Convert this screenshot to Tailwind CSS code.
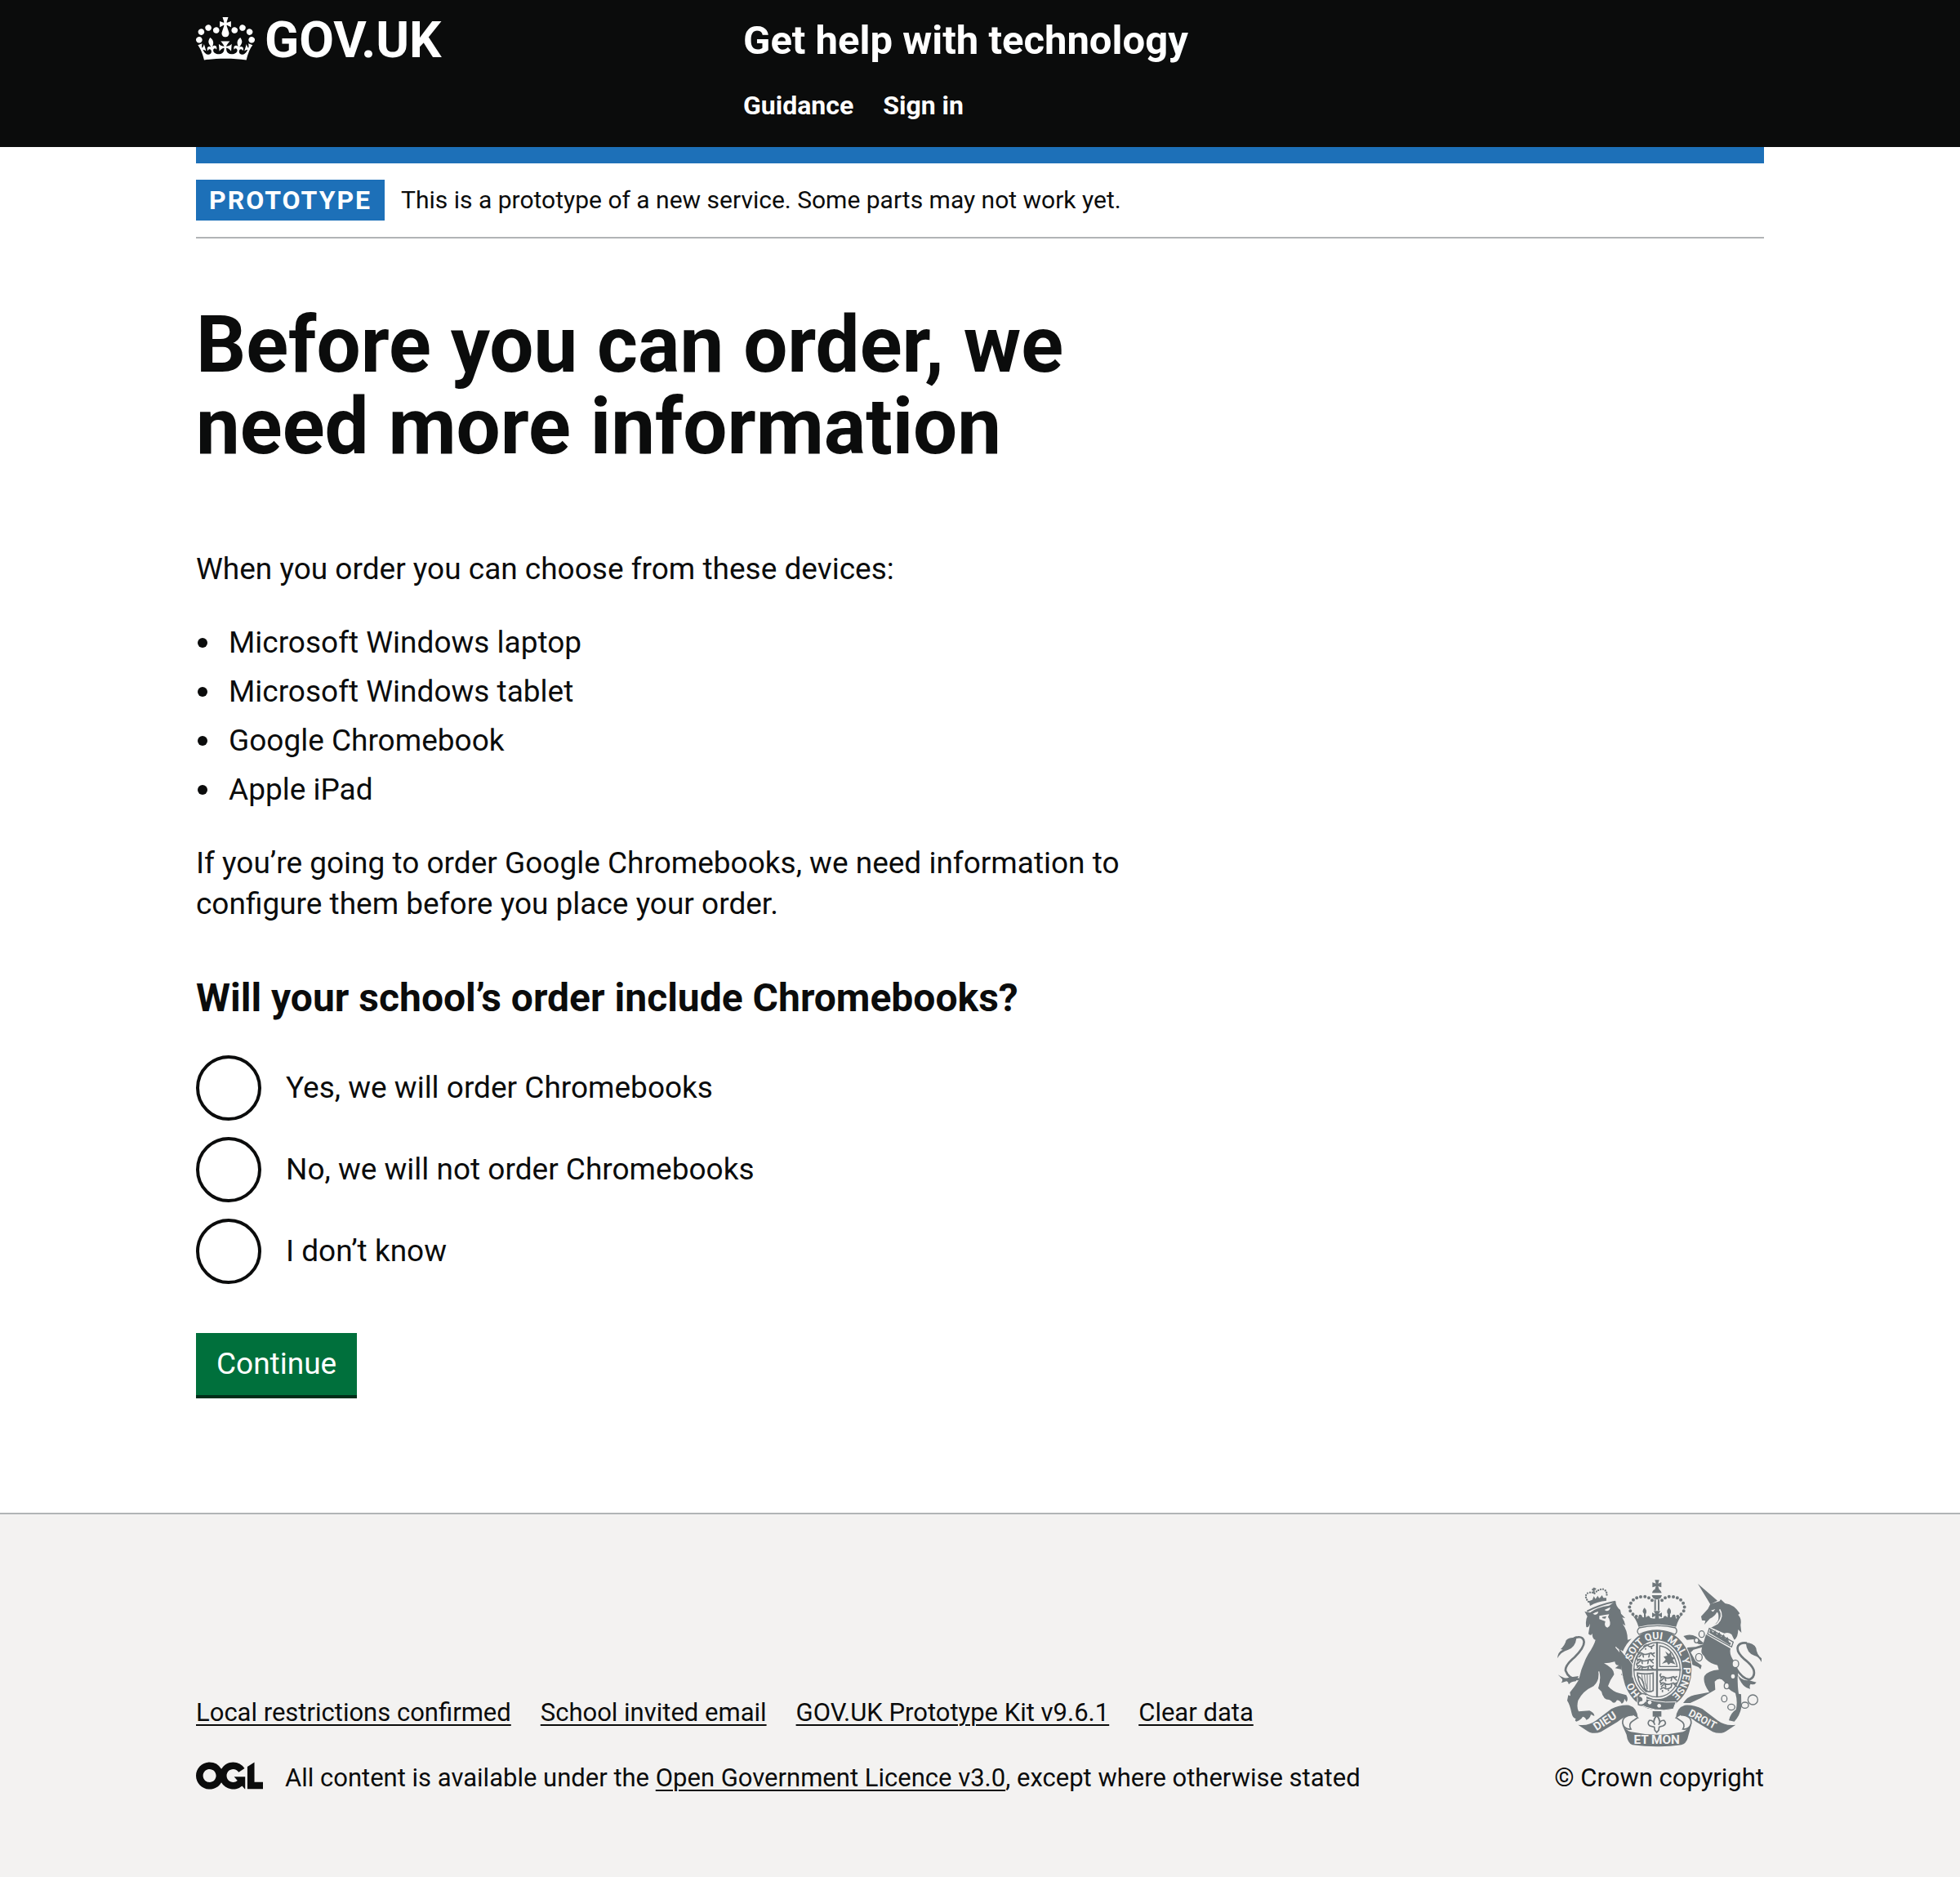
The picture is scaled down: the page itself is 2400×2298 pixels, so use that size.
<!DOCTYPE html>
<html lang="en">
<head>
<meta charset="utf-8">
<meta name="viewport" content="width=device-width, initial-scale=1">
<title>Before you can order, we need more information – Get help with technology</title>
<script src="https://cdn.jsdelivr.net/npm/@tailwindcss/browser@4"></script>
</head>
<body class="flex min-h-screen flex-col bg-[#f3f2f1] font-[Roboto,'Liberation_Sans',sans-serif] text-[#0b0c0c]">
<header class="bg-[#0b0c0c] px-10 text-white">
  <div class="mx-auto flex h-[180px] max-w-[1920px] items-start">
    <a href="#" class="flex w-[670px] shrink-0 items-start gap-3" aria-label="GOV.UK">
      <svg class="mt-[21px] h-[53px] w-[72px] shrink-0" viewBox="0 0 132 97" fill="currentColor" aria-hidden="true"><path fill-rule="evenodd" d="M25 30.2c3.5 1.5 7.7-.2 9.1-3.7 1.5-3.6-.2-7.8-3.9-9.2-3.6-1.4-7.6.3-9.1 3.9-1.4 3.5.3 7.5 3.9 9zM9 39.5c3.6 1.5 7.8-.2 9.2-3.7 1.5-3.6-.2-7.8-3.9-9.1-3.6-1.5-7.6.2-9.1 3.8-1.4 3.5.3 7.5 3.8 9zM4.4 57.2c3.5 1.5 7.7-.2 9.1-3.8 1.5-3.6-.2-7.7-3.9-9.1-3.5-1.5-7.6.3-9.1 3.8-1.4 3.5.3 7.6 3.9 9.1zm38.3-21.4c3.5 1.5 7.7-.2 9.1-3.8 1.5-3.6-.2-7.7-3.9-9.1-3.6-1.5-7.6.3-9.1 3.8-1.3 3.6.4 7.7 3.9 9.1zm64.4-5.6c-3.6 1.5-7.8-.2-9.1-3.7-1.5-3.6.2-7.8 3.8-9.2 3.6-1.4 7.7.3 9.2 3.9 1.3 3.5-.4 7.5-3.9 9zm15.9 9.3c-3.6 1.5-7.7-.2-9.1-3.7-1.5-3.6.2-7.8 3.7-9.1 3.6-1.5 7.7.2 9.2 3.8 1.5 3.5-.3 7.5-3.8 9zm4.7 17.7c-3.6 1.5-7.8-.2-9.2-3.8-1.5-3.6.2-7.7 3.9-9.1 3.6-1.5 7.7.3 9.2 3.8 1.3 3.5-.4 7.6-3.9 9.1zM89.3 35.8c-3.6 1.5-7.8-.2-9.2-3.8-1.4-3.6.2-7.7 3.9-9.1 3.6-1.5 7.7.3 9.2 3.8 1.4 3.6-.3 7.7-3.9 9.1zM69.7 17.7l8.9 4.7V9.3l-8.9 2.8c-.2-.3-.5-.6-.9-.9L72.4 0H59.6l3.5 11.2c-.3.3-.6.5-.9.9l-8.8-2.8v13.1l8.8-4.7c.3.3.6.7.9.9l-5 15.4v.1c-.2.8-.4 1.6-.4 2.4 0 4.1 3.1 7.5 7 8.1h.2c.3 0 .7.1 1 .1.4 0 .7 0 1-.1h.2c4-.6 7.1-4.1 7.1-8.1 0-.8-.1-1.7-.4-2.4V34l-5.1-15.4c.4-.2.7-.6 1-.9zM66 92.8c16.9 0 32.8 1.1 47.1 3.2 4-16.9 8.9-26.7 14-33.5l-9.6-3.4c1 4.9 1.1 7.2 0 10.2-1.5-1.4-3-4.3-4.2-8.7L108.6 76c2.8-2 5-3.2 7.5-3.3-4.4 9.4-10 11.9-13.6 11.2-4.3-.8-6.3-4.6-5.6-7.9 1-4.7 5.7-5.9 8-.5 4.3-8.7-3-11.4-7.6-8.8 7.1-7.2 7.9-13.5 2.1-21.1-8 6.1-8.1 12.3-4.5 20.8-4.7-5.4-12.1-2.5-9.5 6.2 3.4-5.2 7.9-2 7.2 3.1-.6 4.3-6.4 7.8-13.5 7.2-10.3-.9-10.9-8-11.2-13.8 2.5-.5 7.1 1.8 11 7.3L80.2 60c-4.1 4.4-8 5.3-12.3 5.4 1.4-4.4 8-11.6 8-11.6H55.5s6.4 7.2 7.9 11.6c-4.2-.1-8-1-12.3-5.4l1.4 16.4c3.9-5.5 8.5-7.7 10.9-7.3-.3 5.8-.9 12.8-11.1 13.8-7.2.6-12.9-2.9-13.5-7.2-.7-5 3.8-8.3 7.1-3.1 2.7-8.7-4.6-11.6-9.4-6.2 3.7-8.5 3.6-14.7-4.6-20.8-5.8 7.6-5 13.9 2.2 21.1-4.7-2.6-11.9.1-7.7 8.8 2.3-5.5 7.1-4.2 8.1.5.7 3.3-1.3 7.1-5.7 7.9-3.5.7-9-1.8-13.5-11.2 2.5.1 4.7 1.3 7.5 3.3l-4.7-15.4c-1.2 4.4-2.7 7.2-4.3 8.7-1.1-3-.9-5.3 0-10.2l-9.5 3.4c5 6.9 9.9 16.7 14 33.5 14.8-2.1 30.8-3.2 47.7-3.2z"/></svg>
      <span class="text-[62px] leading-[98px] font-bold">GOV.UK</span>
    </a>
    <div class="pt-5">
      <a href="#" class="block text-[49px] leading-[60px] font-bold">Get help with technology</a>
      <nav class="mt-[29px] flex gap-9 text-[32px] leading-[40px] font-bold" aria-label="Main">
        <a href="#">Guidance</a>
        <a href="#">Sign in</a>
      </nav>
    </div>
  </div>
</header>

<div class="grow bg-white px-10">
  <div class="mx-auto max-w-[1920px] border-t-[20px] border-[#1d70b8] pb-[140px]">
    <div class="flex items-center gap-5 border-b-2 border-[#b1b4b6] py-5">
      <strong class="bg-[#1d70b8] px-4 text-[32px] leading-[50px] font-bold tracking-[2px] text-white uppercase">Prototype</strong>
      <span class="text-[30px] leading-[40px]">This is a prototype of a new service. Some parts may not work yet.</span>
    </div>
    <main class="max-w-[1250px] pt-20 text-[37px] leading-[50px]">
      <h1 class="mb-[100px] text-[96px] leading-[100px] font-bold">Before you can order, we need more information</h1>
      <p class="mb-10">When you order you can choose from these devices:</p>
      <ul class="mb-10 flex list-none flex-col gap-[10px] pl-[2px]">
        <li class="flex items-center gap-[26px] before:size-3 before:rounded-full before:bg-[#0b0c0c]">Microsoft Windows laptop</li>
        <li class="flex items-center gap-[26px] before:size-3 before:rounded-full before:bg-[#0b0c0c]">Microsoft Windows tablet</li>
        <li class="flex items-center gap-[26px] before:size-3 before:rounded-full before:bg-[#0b0c0c]">Google Chromebook</li>
        <li class="flex items-center gap-[26px] before:size-3 before:rounded-full before:bg-[#0b0c0c]">Apple iPad</li>
      </ul>
      <p class="mb-[60px]">If you’re going to order Google Chromebooks, we need information to configure them before you place your order.</p>
      <form>
        <fieldset>
          <legend class="mb-10 text-[48px] leading-[60px] font-bold">Will your school’s order include Chromebooks?</legend>
          <div class="flex flex-col gap-5">
            <div class="flex items-center gap-[30px]">
              <input type="radio" name="chromebooks" id="yes" value="yes" class="size-20 appearance-none rounded-full border-4 border-[#0b0c0c] bg-white">
              <label for="yes">Yes, we will order Chromebooks</label>
            </div>
            <div class="flex items-center gap-[30px]">
              <input type="radio" name="chromebooks" id="no" value="no" class="size-20 appearance-none rounded-full border-4 border-[#0b0c0c] bg-white">
              <label for="no">No, we will not order Chromebooks</label>
            </div>
            <div class="flex items-center gap-[30px]">
              <input type="radio" name="chromebooks" id="unknown" value="unknown" class="size-20 appearance-none rounded-full border-4 border-[#0b0c0c] bg-white">
              <label for="unknown">I don’t know</label>
            </div>
          </div>
        </fieldset>
        <button type="submit" class="mt-[60px] block border-b-4 border-[#002d18] bg-[#00703c] px-[25px] py-[13px] text-white">Continue</button>
      </form>
    </main>
  </div>
</div>

<footer class="border-t-2 border-[#b1b4b6] bg-[#f3f2f1] px-10 pt-20 pb-[101px] text-[31px] leading-[40px]">
  <div class="mx-auto flex max-w-[1920px] items-end justify-between">
    <div>
      <ul class="mb-10 flex gap-9">
        <li><a href="#" class="underline decoration-2 underline-offset-4">Local restrictions confirmed</a></li>
        <li><a href="#" class="underline decoration-2 underline-offset-4">School invited email</a></li>
        <li><a href="#" class="underline decoration-2 underline-offset-4">GOV.UK Prototype Kit v9.6.1</a></li>
        <li><a href="#" class="underline decoration-2 underline-offset-4">Clear data</a></li>
      </ul>
      <div class="flex items-start gap-[27px]">
        <svg class="h-[34px] w-[82px] shrink-0" viewBox="0 0 483.2 195.7" fill="currentColor" aria-hidden="true"><path d="M421.5 142.8V.1l-50.7 32.3v161.1h112.4v-50.7zm-122.3-9.6A47.12 47.12 0 0 1 221 97.8c0-26 21.1-47.1 47.1-47.1 16.7 0 31.4 8.7 39.7 21.8l42.7-27.2A97.63 97.63 0 0 0 268.1 0c-36.5 0-68.3 20.1-85.1 49.7A98 98 0 0 0 97.8 0C43.9 0 0 43.9 0 97.8s43.9 97.8 97.8 97.8c36.5 0 68.3-20.1 85.1-49.7a97.76 97.76 0 0 0 149.6 25.4l19.4 22.2h3v-87.8h-80l24.3 27.5zM97.8 145c-26 0-47.1-21.1-47.1-47.1s21.1-47.1 47.1-47.1 47.1 21.1 47.1 47.1S123.8 145 97.8 145"/></svg>
        <p>All content is available under the <a href="#" class="underline decoration-2 underline-offset-4">Open Government Licence v3.0</a>, except where otherwise stated</p>
      </div>
    </div>
    <a href="#" class="flex flex-col items-center gap-[18px]">
      <svg class="h-[205px] w-[250px]" viewBox="72 71 750 615" fill="#6f777b" role="img" aria-label="Royal coat of arms">
        <defs>
          <path id="garter" d="M438 515A97 113 0 0 1 438 289A97 113 0 0 1 438 515"/>
          <g id="ribbon">
            <path d="M148 604Q185 610 215 588L270 546Q300 530 335 532Q365 540 368 580L350 570Q325 566 292 594L232 630Q200 642 175 622Z"/>
            <path d="M350 568Q308 570 312 600Q318 622 342 620Q330 600 352 588Q370 575 368 580" fill="#f3f2f1" stroke="#6f777b" stroke-width="5"/>
          </g>
          <g id="leopard" fill="none" stroke="#6f777b" stroke-width="5" stroke-linecap="round">
            <path d="M4 12q6-10 14-4q8 6 20 2l12-4q6 6 12 0M14 12l-8 8M20 12l2 9M44 12l-2 9M52 10l10 9M4 6q-6-6 0-10"/>
          </g>
        </defs>
        <!-- lion -->
        <path d="M172 188L192 192Q215 172 262 166L286 150Q286 170 303 182L306 196L321 212L310 210Q318 222 322 240L312 234Q330 258 330 292L345 288Q325 305 312 335L288 320Q318 350 330 372Q345 372 348 390L347 430Q335 438 328 418Q318 428 306 420Q315 410 305 400L284 396L298 385Q285 388 283 372Q262 378 243 378Q282 398 280 420Q265 440 258 462Q275 482 300 488L325 495Q334 510 326 520L318 508Q318 522 308 526Q300 512 290 514Q285 526 275 522Q270 514 262 512Q240 512 234 482L222 470Q232 440 222 412Q228 440 205 462Q165 480 148 515Q142 540 150 555L190 552Q208 560 208 572L195 566Q192 582 178 586Q175 575 165 574Q160 585 142 592Q134 590 140 582Q128 580 124 560Q118 530 108 515L112 495L120 498L118 485Q135 465 150 440Q160 390 185 345Q208 310 212 292Q200 290 200 268Q196 280 186 270L192 232Q185 250 178 244Q174 220 182 206Z"/>
        <path d="M180 184Q225 160 284 148L286 154Q230 164 182 190Z"/>
        <path d="M202 196Q212 190 222 188Q222 198 210 200ZM245 182L266 172Q266 184 252 186ZM226 204L262 198L258 208L262 214Q272 240 256 247Q242 244 248 224L226 216Z" fill="#f3f2f1"/>
        <path d="M236 208L252 205L248 214L238 213Z"/>
        <path d="M224 408Q232 440 218 468M286 318L328 368" fill="none" stroke="#f3f2f1" stroke-width="4"/>
        <path d="M188 150Q220 136 252 138L252 148Q220 150 192 167Z"/>
        <path d="M200 146l6-14l6 10l8-12l6 10l10-12l6 12Z"/>
        <path d="M186 152Q168 130 184 120Q198 114 208 122Q224 104 240 106Q258 112 252 136" fill="none" stroke="#6f777b" stroke-width="7" stroke-linecap="round" stroke-dasharray="0 9"/>
        <path d="M206 100v22M199 108l15-3" stroke="#6f777b" stroke-width="6"/>
        <path d="M152 436Q115 440 102 405Q100 385 135 356Q170 322 170 300Q168 280 148 282Q134 282 122 296" fill="none" stroke="#6f777b" stroke-width="8"/>
        <path d="M72 360Q74 335 92 328L84 326Q100 312 104 294Q118 280 142 286Q138 318 112 328Q84 336 72 360ZM74 420Q100 438 114 430L150 425L140 444Q120 446 114 456Q112 446 106 444L86 450Q94 440 88 434Z"/>
        <!-- unicorn -->
        <path d="M588 86L660 148L634 162Z"/>
        <path d="M634 160L668 150L672 143L688 158Q722 162 742 195L736 200Q750 215 745 238L748 266L736 254Q736 282 722 292L712 272Q700 262 685 268L634 246Q668 228 664 206Q664 192 658 190Q650 206 632 214L612 236L616 222L603 220L600 206L625 178Z"/>
        <path d="M636 184l16-5l-8 10z" fill="#f3f2f1"/>
        <path d="M668 180Q684 205 660 232L634 246" stroke="#f3f2f1" stroke-width="5" fill="none"/>
        <path d="M630 250L718 300L712 318L624 270Z" fill="#f3f2f1" stroke="#6f777b" stroke-width="4"/>
        <path d="M630 266l4-14l10 13l8-8l6 16l10-9l6 17l10-10l4 17l10-6l4 18l8 4l-4 8z"/>
        <path d="M618 272L708 324Q702 345 722 372Q740 400 734 430Q734 465 738 490L747 492L748 540Q742 572 722 592L702 588Q708 560 728 548Q735 520 726 488Q695 475 685 446Q668 426 650 445L652 475L600 505L560 524L534 524Q550 500 575 495L630 484Q605 450 612 425Q625 405 665 402L660 385Q620 375 610 350Q595 340 605 315Z"/>
        <path d="M612 306Q585 315 572 290L548 292L535 278Q560 268 582 280L600 296ZM610 318L572 328L562 338L580 370L602 386L598 400L590 392L568 384L566 372L545 336L550 320L580 318L608 308Z"/>
        <g fill="#f3f2f1" stroke="#6f777b" stroke-width="4">
          <ellipse cx="602" cy="271" rx="10" ry="12"/><ellipse cx="583" cy="294" rx="8" ry="9"/><ellipse cx="592" cy="356" rx="12" ry="14"/><ellipse cx="726" cy="380" rx="12" ry="14"/><ellipse cx="717" cy="426" rx="9" ry="10"/><ellipse cx="694" cy="461" rx="9" ry="11"/><ellipse cx="685" cy="508" rx="10" ry="12"/><ellipse cx="711" cy="539" rx="13" ry="11"/><ellipse cx="761" cy="532" rx="13" ry="11"/><circle cx="790" cy="512" r="18"/>
        </g>
        <path d="M728 396Q752 436 778 438Q800 428 793 402Q786 384 760 364Q726 334 736 314Q746 300 768 304" fill="none" stroke="#6f777b" stroke-width="8"/>
        <path d="M764 302Q792 302 802 322Q804 345 822 360L822 374Q810 352 796 350Q768 342 764 302ZM734 420Q750 444 774 440L803 448Q795 460 782 454Q776 460 780 472Q750 468 734 420Z"/>
        <!-- garter and shield -->
        <ellipse cx="438" cy="402" rx="130" ry="150" fill="#f3f2f1"/>
        <ellipse cx="438" cy="402" rx="127" ry="147"/>
        <ellipse cx="438" cy="402" rx="92" ry="108" fill="#f3f2f1"/>
        <ellipse cx="438" cy="402" rx="85" ry="100" fill="none" stroke="#6f777b" stroke-width="4"/>
        <path d="M438 300v202M350 402h176" stroke="#6f777b" stroke-width="7"/>
        <use href="#leopard" x="366" y="334"/><use href="#leopard" x="362" y="358"/><use href="#leopard" x="362" y="381"/><path d="M388 318q10-12 18-4t22-4M396 322v6M418 318v8" fill="none" stroke="#6f777b" stroke-width="5"/>
        <use href="#leopard" x="448" y="421"/><use href="#leopard" x="448" y="444"/><path d="M450 474q10-10 18-4t22-4M458 476v8M480 472v8" fill="none" stroke="#6f777b" stroke-width="5"/>
        <path d="M448 314Q498 320 512 390H448Z" fill="none" stroke="#6f777b" stroke-width="4"/>
        <path d="M456 380l14-16l-8-10l14-4l-8-16l14 10l6-8l4 18l12 4l-8 8l10 16l-18-6l-8 8l-6-10z"/>
        <path d="M366 414Q398 420 424 414V478Q404 490 392 470Q388 434 366 424ZM366 418Q370 460 400 484" fill="none" stroke="#6f777b" stroke-width="5"/>
        <path d="M392 420q0 30 10 54M402 420v54M412 420v60M382 420q2 22 8 34" fill="none" stroke="#6f777b" stroke-width="3"/>
        <path d="M298 322L332 366Q350 385 346 430L312 424Z"/>
        <path d="M306 330Q332 355 350 385L348 430" fill="none" stroke="#f3f2f1" stroke-width="3"/>
        <g fill="#f3f2f1" class="text-[37px] font-bold">
          <text><textPath href="#garter" startOffset="68">HO</textPath></text>
          <text><textPath href="#garter" startOffset="198">SOIT</textPath></text>
          <text><textPath href="#garter" startOffset="288">QUI</textPath></text>
          <text><textPath href="#garter" startOffset="366">MAL Y</textPath></text>
          <text><textPath href="#garter" startOffset="486">PENSE</textPath></text>
        </g>
        <path d="M366 496Q430 526 508 520L498 546Q430 562 366 524Z" stroke="#f3f2f1" stroke-width="3"/>
        <circle cx="411" cy="522" r="7" fill="#f3f2f1"/><circle cx="446" cy="534" r="7" fill="#f3f2f1"/>
        <path d="M400 494Q376 482 368 502Q384 504 382 514Q366 516 370 530Q386 536 398 520" fill="#f3f2f1" stroke="#6f777b" stroke-width="5"/>
        <!-- imperial crown -->
        <path d="M430 72h16l-4 13l12-4v18l-12-4l4 12h-16l4-12l-13 4v-18l13 4zM420 120q2-14 17-15q15 1 18 15zM419 128h37q-2 14-18 16q-17-2-19-16z"/>
        <path d="M431 144v40M444 144v40" stroke="#6f777b" stroke-width="6"/>
        <path d="M362 206Q332 190 338 166Q348 134 390 133Q414 136 422 150M514 206Q544 190 538 166Q528 134 486 133Q462 136 454 150" fill="none" stroke="#6f777b" stroke-width="12" stroke-linecap="round" stroke-dasharray="0 15"/>
        <path d="M346 200L368 214L372 200Q382 196 384 208L390 210V196Q380 186 392 174Q404 186 396 198L398 210Q408 196 414 212L430 214L432 204L420 210V192L432 198L426 186H450L444 198L456 192V210L444 204L446 214L460 212Q466 196 476 210L478 198Q470 186 482 174Q494 186 486 198V210L492 208Q494 196 504 200L508 214L530 200Q516 216 508 244Q437 226 370 244Q362 216 346 200Z"/>
        <path d="M372 248Q437 232 506 248Q516 262 504 272Q437 242 372 272Q360 262 372 248Z" fill="#f3f2f1" stroke="#6f777b" stroke-width="4"/>
        <!-- motto ribbons -->
        <use href="#ribbon"/>
        <use href="#ribbon" transform="translate(875 0) scale(-1 1)"/>
        <path d="M310 604Q325 625 342 630Q437 650 533 630Q552 622 565 600L550 655Q545 672 527 678Q437 690 348 678Q330 672 326 640Z"/>
        <g fill="#f3f2f1" class="font-bold">
          <text transform="translate(216 627) rotate(-33)" class="text-[42px]">DIEU</text>
          <text transform="translate(551 569) rotate(28)" class="text-[38px]">DROIT</text>
          <text x="437" y="674" text-anchor="middle" class="text-[46px]">ET MON</text>
        </g>
        <path d="M422 554h32v20h-32z"/>
        <path d="M437 570Q454 588 444 604Q450 586 464 588Q476 600 460 608L446 612L444 624L437 632L430 624L428 612L412 608Q400 600 410 588Q424 586 430 604Q420 588 437 570Z" fill="#f3f2f1" stroke="#6f777b" stroke-width="5"/>
      </svg>
      <span>© Crown copyright</span>
    </a>
  </div>
</footer>
</body>
</html>
